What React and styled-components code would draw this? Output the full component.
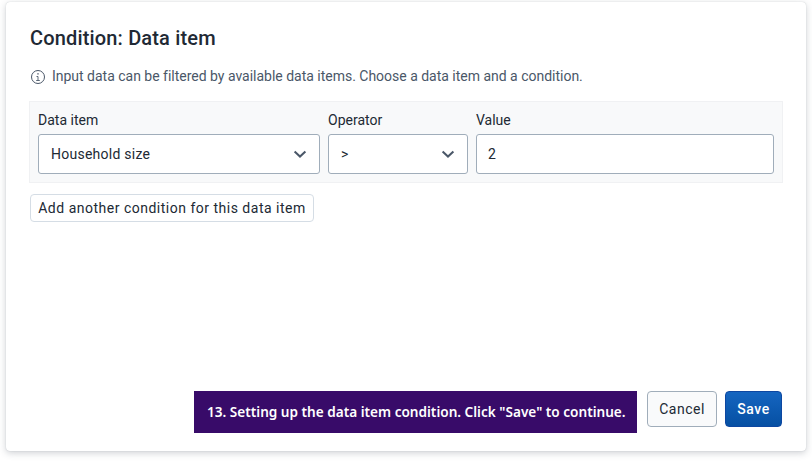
import React from 'react';
import styled, { createGlobalStyle } from 'styled-components';

const GlobalStyle = createGlobalStyle`
  *, *::before, *::after { box-sizing: border-box; }
  body {
    margin: 0;
    background: #fff;
    color: #212934;
    font-family: Roboto, "Liberation Sans", sans-serif;
    font-size: 14px;
  }
`;

const Page = styled.div`
  height: 461px;
  padding: 2px 6px 10px;
  overflow: hidden;
`;

const Modal = styled.main`
  display: flex;
  flex-direction: column;
  height: 449px;
  padding: 24px;
  border-radius: 4px;
  background: #fff;
  box-shadow: 0 0 1px rgba(64, 75, 90, 0.3), 0 2px 7px rgba(64, 75, 90, 0.26);
`;

const Title = styled.h1`
  margin: 0;
  font-size: 20px;
  font-weight: 500;
  line-height: 24px;
  letter-spacing: 0.16px;
`;

const Hint = styled.p`
  display: flex;
  align-items: center;
  gap: 6px;
  height: 18px;
  margin: 18px 0 15px;
  color: #4a5768;
  line-height: 18px;
  white-space: nowrap;
`;

const HintText = styled.span`
  position: relative;
  top: -1px;
  letter-spacing: -0.011px;
`;

const Conditions = styled.div`
  display: grid;
  grid-template-columns: 282px 140px 298px;
  gap: 8px;
  height: 82px;
  margin: 0 -1px;
  padding: 9px 8px 8px;
  border: 1px solid #f0f1f3;
  background: #f8f9fa;
`;

const Field = styled.div`
  display: flex;
  flex-direction: column;
`;

const Label = styled.span`
  height: 23px;
  line-height: 18px;
`;

const Control = styled.div`
  display: flex;
  align-items: center;
  justify-content: space-between;
  height: 40px;
  padding: 0 11px 0 ${(p) => p.$inset || 12}px;
  border: 1px solid #a0adba;
  border-radius: 3px;
  background: #fff;
  letter-spacing: 0.25px;
`;

const Button = styled.button`
  flex: none;
  height: 36px;
  padding: 0;
  border: 1px solid #a0adba;
  border-radius: 4px;
  background: #f9fafb;
  color: #212934;
  font: 400 14px/16px Roboto, "Liberation Sans", sans-serif;
  letter-spacing: 0.5px;
  white-space: nowrap;
`;

const AddButton = styled(Button)`
  align-self: flex-start;
  width: 284px;
  height: 28px;
  margin-top: 11px;
  border-color: #d5dde5;
  background: #fff;
`;

const CancelButton = styled(Button)`
  width: 70px;
  margin-left: 10px;
`;

const SaveButton = styled(Button)`
  width: 57px;
  margin-left: 8px;
  border-color: #0d47a1;
  background: linear-gradient(180deg, #1565c0 0%, #0650a3 100%);
  color: #fff;
  font-weight: 500;
`;

const Footer = styled.footer`
  display: flex;
  justify-content: flex-end;
  align-items: flex-start;
  height: 36px;
  margin-top: auto;
`;

const Caption = styled.div`
  width: 443px;
  height: 42px;
  padding-left: 13px;
  background: #380b69;
  color: #fff;
  font: 600 13.6px/42px "Noto Sans", "Open Sans", sans-serif;
  white-space: nowrap;
`;

const InfoIcon = () => (
  <svg width="16" height="16" viewBox="0 0 16 16" fill="none" stroke="#4a5768">
    <circle cx="8" cy="8" r="6.5" />
    <path d="M6.5 7.5H8V11.2M6.2 11.5H9.8" strokeWidth="0.9" />
    <path d="M7.3 4.9H8.7" strokeWidth="1.3" />
  </svg>
);

const Chevron = () => (
  <svg width="16" height="16" viewBox="0 0 16 16" fill="none" stroke="#4a5768" strokeWidth="2">
    <path d="M2.6 5.5L8 10.6L13.4 5.5" />
  </svg>
);

export default function App() {
  return (
    <>
      <GlobalStyle />
      <Page>
        <Modal>
          <Title>Condition: Data item</Title>
          <Hint>
            <InfoIcon />
            <HintText>
              Input data can be filtered by available data items. Choose a data item and a condition.
            </HintText>
          </Hint>
          <Conditions>
            <Field>
              <Label>Data item</Label>
              <Control>Household size<Chevron /></Control>
            </Field>
            <Field>
              <Label>Operator</Label>
              <Control>&gt;<Chevron /></Control>
            </Field>
            <Field>
              <Label>Value</Label>
              <Control $inset={11}>2</Control>
            </Field>
          </Conditions>
          <AddButton>Add another condition for this data item</AddButton>
          <Footer>
            <Caption>13. Setting up the data item condition. Click "Save" to continue.</Caption>
            <CancelButton>Cancel</CancelButton>
            <SaveButton>Save</SaveButton>
          </Footer>
        </Modal>
      </Page>
    </>
  );
}
